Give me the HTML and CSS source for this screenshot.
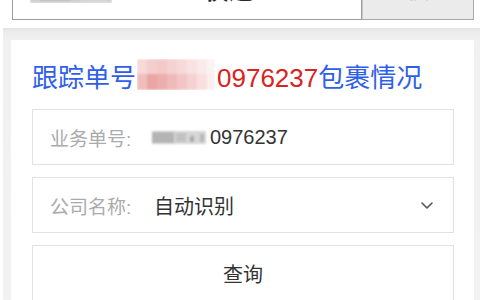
FILE: index.html
```html
<!DOCTYPE html>
<html lang="zh-CN">
<head>
<meta charset="utf-8">
<title>快递查询</title>
<link rel="stylesheet" href="styles.css">
</head>
<body>
<header class="topbar">
  <div class="search">
    <svg class="smudge-top" width="82" height="20" viewBox="0 0 82 20" aria-hidden="true">
      <defs><filter id="b0"><feGaussianBlur stdDeviation="1.2"/></filter></defs>
      <g filter="url(#b0)">
        <rect x="0" y="0" width="82" height="20" fill="#cfcfcf"/>
        <rect x="10" y="4" width="30" height="14" fill="#bdbdbd"/>
        <rect x="50" y="4" width="28" height="14" fill="#d9d9d9"/>
      </g>
    </svg>
    <span class="query">976237 快递</span>
    <span class="caret">|</span>
  </div>
  <div class="search-btn">查快递</div>
</header>
<main class="content">
  <section class="panel">
    <h1 class="title">跟踪单号<svg class="smudge-title" width="78" height="31" viewBox="0 0 78 31" aria-hidden="true">
        <defs><filter id="b1"><feGaussianBlur stdDeviation="0.9"/></filter></defs>
        <g filter="url(#b1)">
          <rect x="0" y="0" width="10" height="15" fill="#f7d9d9"/>
          <rect x="10" y="0" width="10" height="15" fill="#f4cdcd"/>
          <rect x="20" y="0" width="10" height="15" fill="#f3c9c9"/>
          <rect x="30" y="0" width="10" height="15" fill="#f5d1d1"/>
          <rect x="40" y="0" width="10" height="15" fill="#f7d9d9"/>
          <rect x="50" y="0" width="10" height="15" fill="#f9e2e2"/>
          <rect x="60" y="0" width="10" height="15" fill="#fbeaea"/>
          <rect x="70" y="0" width="8" height="15" fill="#fdf3f3"/>
          <rect x="0" y="15" width="10" height="16" fill="#f1bdbd"/>
          <rect x="10" y="15" width="10" height="16" fill="#eaa5a5"/>
          <rect x="20" y="15" width="10" height="16" fill="#edaeae"/>
          <rect x="30" y="15" width="10" height="16" fill="#f0b9b9"/>
          <rect x="40" y="15" width="10" height="16" fill="#f3c5c5"/>
          <rect x="50" y="15" width="10" height="16" fill="#f6d1d1"/>
          <rect x="60" y="15" width="10" height="16" fill="#f9dfdf"/>
          <rect x="70" y="15" width="8" height="16" fill="#fcefef"/>
        </g>
      </svg><span class="num">0976237</span>包裹情况</h1>

    <div class="field">
      <span class="label">业务单号:</span>
      <svg class="smudge-field" width="58" height="18" viewBox="0 0 58 18" aria-hidden="true">
        <defs><filter id="b2"><feGaussianBlur stdDeviation="1.3"/></filter></defs>
        <g filter="url(#b2)">
          <rect x="2" y="3" width="54" height="13" fill="#d6d6d6"/>
          <rect x="2" y="4" width="22" height="11" fill="#b4b4b4"/>
          <rect x="26" y="5" width="10" height="9" fill="#c2c2c2"/>
          <rect x="40" y="8" width="4" height="6" fill="#a8a8a8"/>
          <rect x="50" y="6" width="4" height="8" fill="#b8b8b8"/>
        </g>
      </svg>
      <span class="value">0976237</span>
    </div>

    <div class="field">
      <span class="label">公司名称:</span>
      <span class="value select-value">自动识别</span>
      <svg class="chevron" width="12" height="7" viewBox="0 0 12 7" aria-hidden="true">
        <polyline points="1,1 6,6 11,1" fill="none" stroke="#555" stroke-width="1.6" stroke-linecap="round" stroke-linejoin="round"/>
      </svg>
    </div>

    <div class="field query-btn">查询</div>
  </section>
</main>
</body>
</html>
```

FILE: styles.css
```css
html, body {
  margin: 0;
  padding: 0;
  overflow: hidden;
}

body {
  background: #ffffff;
  font-family: "Liberation Sans", "Noto Sans CJK SC", sans-serif;
  color: #333;
}

/* ---- top search bar (scrolled partly out of view) ---- */
.topbar {
  display: flex;
  height: 46px;
  margin: -26px 6px 8px 12px;
}

.search {
  flex: 0 0 350px;
  box-sizing: border-box;
  border: 1px solid #9a9a9a;
  background: #fff;
  display: flex;
  align-items: flex-start;
  padding-left: 17px;
  font-size: 24px;
  line-height: 31px;
  color: #2a2a2a;
  overflow: hidden;
}

.smudge-top {
  margin-top: 8px;
  flex: none;
}

.query {
  margin-left: 6px;
  font-weight: bold;
  white-space: nowrap;
}

.caret {
  margin-left: 46px;
  color: #888;
  font-weight: normal;
  font-size: 18px;
}

.search-btn {
  flex: 1;
  box-sizing: border-box;
  border: 1px solid #a8a8a8;
  border-left-color: #c8c8c8;
  background: #ebebeb;
  color: #b0b0b0;
  font-size: 22px;
  line-height: 31px;
  text-align: center;
}

/* ---- content area ---- */
.content {
  margin-left: 3px;
  padding: 12px 6px 0 8px;
  background: linear-gradient(#e2e2e2 0, #ececec 4px, #f1f1f1 12px, #f2f2f2 100%);
  min-height: 300px;
}

.panel {
  background: #fff;
  padding: 21px 20px 20px 21px;
  display: flex;
  flex-direction: column;
  gap: 12px;
}

.title {
  margin: 0 0 1px 0;
  height: 35px;
  display: flex;
  align-items: center;
  font-size: 26px;
  font-weight: normal;
  line-height: 35px;
  color: #2f5fe8;
  white-space: nowrap;
}

.smudge-title {
  flex: none;
  align-self: flex-start;
  margin: -2px 2px 0 1px;
}

.num {
  color: #d92323;
}

.field {
  box-sizing: border-box;
  height: 56px;
  border: 1px solid #e2e2e2;
  display: flex;
  align-items: center;
  padding: 0 20px 0 17px;
  font-size: 19px;
  background: #fff;
}

.label {
  flex: 0 0 100px;
  color: #ababab;
}

.value {
  color: #333;
  font-size: 20px;
}

.smudge-field {
  flex: none;
  margin-right: 2px;
}

.select-value {
  margin-left: 4px;
  flex: 1;
}

.chevron {
  flex: none;
}

.query-btn {
  justify-content: center;
  padding: 0;
  font-size: 20px;
  color: #333;
}
```
